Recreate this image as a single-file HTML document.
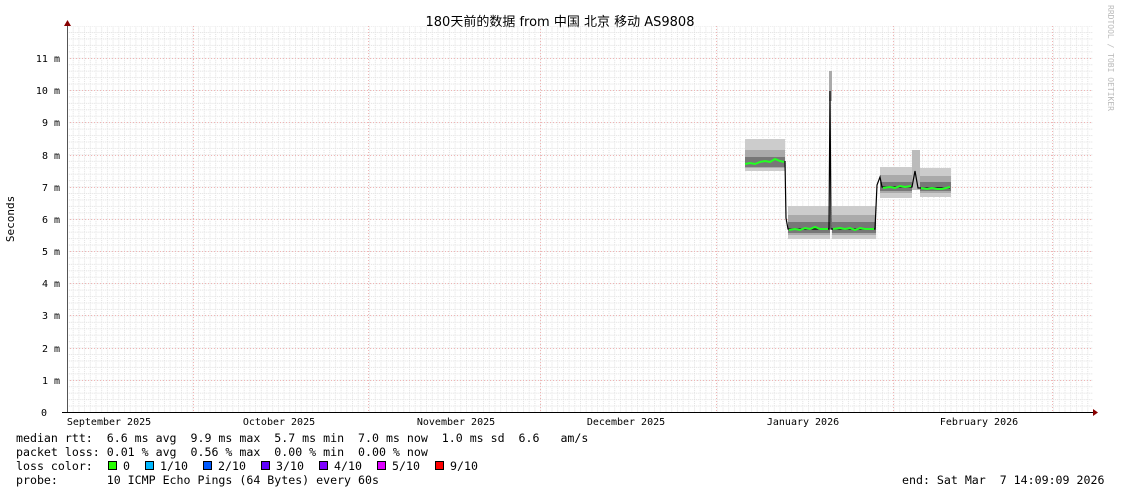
<!DOCTYPE html>
<html><head><meta charset="utf-8"><style>
html,body{margin:0;padding:0;background:#fff;width:1121px;height:494px;overflow:hidden}
svg text{font-family:"DejaVu Sans Mono","Liberation Mono",monospace;font-size:11.6px;fill:#000;white-space:pre}
</style></head><body>
<svg width="1121" height="494" viewBox="0 0 1121 494" xmlns="http://www.w3.org/2000/svg">
<defs>
<pattern id="gh" x="67" y="412" width="5.7" height="6.44" patternUnits="userSpaceOnUse">
<line x1="0" y1="0.5" x2="5.7" y2="0.5" stroke="#e0e0e0" stroke-width="1" stroke-dasharray="1,1"/>
<line x1="0.5" y1="0" x2="0.5" y2="6.44" stroke="#e0e0e0" stroke-width="1" stroke-dasharray="1,1"/>
</pattern>
</defs>
<text x="560" y="26" text-anchor="middle" style="font-family:'DejaVu Sans','Noto Sans CJK SC',sans-serif;font-size:13px">180天前的数据 from 中国 北京 移动 AS9808</text>
<text transform="translate(1108,5) rotate(90)" style="font-size:8px;fill:#bbb">RRDTOOL / TOBI OETIKER</text>
<text transform="translate(14,219) rotate(-90)" text-anchor="middle" style="font-size:11px">Seconds</text>
<rect x="67" y="26" width="1026" height="386" fill="url(#gh)"/>
<g stroke="#f0b4b4" stroke-width="1" stroke-dasharray="1,2">
<line x1="67" y1="58.5" x2="1093" y2="58.5"/><line x1="67" y1="90.5" x2="1093" y2="90.5"/><line x1="67" y1="122.5" x2="1093" y2="122.5"/><line x1="67" y1="155.5" x2="1093" y2="155.5"/><line x1="67" y1="187.5" x2="1093" y2="187.5"/><line x1="67" y1="219.5" x2="1093" y2="219.5"/><line x1="67" y1="251.5" x2="1093" y2="251.5"/><line x1="67" y1="283.5" x2="1093" y2="283.5"/><line x1="67" y1="315.5" x2="1093" y2="315.5"/><line x1="67" y1="348.5" x2="1093" y2="348.5"/><line x1="67" y1="380.5" x2="1093" y2="380.5"/>
<line x1="193.5" y1="26" x2="193.5" y2="412"/><line x1="368.5" y1="26" x2="368.5" y2="412"/><line x1="540.5" y1="26" x2="540.5" y2="412"/><line x1="716.5" y1="26" x2="716.5" y2="412"/><line x1="893.5" y1="26" x2="893.5" y2="412"/><line x1="1052.5" y1="26" x2="1052.5" y2="412"/>
</g>
<g text-anchor="end">
<text x="60" y="62" style="font-size:10px">11 m</text><text x="60" y="94" style="font-size:10px">10 m</text><text x="60" y="126" style="font-size:10px">9 m</text><text x="60" y="159" style="font-size:10px">8 m</text><text x="60" y="191" style="font-size:10px">7 m</text><text x="60" y="223" style="font-size:10px">6 m</text><text x="60" y="255" style="font-size:10px">5 m</text><text x="60" y="287" style="font-size:10px">4 m</text><text x="60" y="319" style="font-size:10px">3 m</text><text x="60" y="352" style="font-size:10px">2 m</text><text x="60" y="384" style="font-size:10px">1 m</text><text x="47" y="416" style="font-size:10px">0</text>
</g>
<g>
<rect x="745" y="139" width="40" height="32" fill="#ccc"/><rect x="745" y="150" width="40" height="18" fill="#aaa"/><rect x="745" y="157" width="40" height="10" fill="#777"/>
<rect x="788" y="206" width="42" height="33" fill="#ccc"/><rect x="788" y="215" width="42" height="20" fill="#aaa"/><rect x="788" y="222" width="42" height="11" fill="#777"/>
<rect x="832" y="206" width="44" height="33" fill="#ccc"/><rect x="832" y="215" width="44" height="20" fill="#aaa"/><rect x="832" y="222" width="44" height="11" fill="#777"/>
<rect x="829" y="71" width="3" height="30" fill="#aaa"/>
<rect x="880" y="167" width="32" height="31" fill="#ccc"/><rect x="880" y="175" width="32" height="18" fill="#aaa"/><rect x="880" y="182" width="32" height="9" fill="#777"/>
<rect x="912" y="150" width="8" height="40" fill="#bbb"/>
<rect x="920" y="168" width="31" height="29" fill="#ccc"/><rect x="920" y="176" width="31" height="17" fill="#aaa"/><rect x="920" y="182" width="31" height="9" fill="#777"/>
<polyline fill="none" stroke="#000" stroke-width="1.2" points="785,161 786,218 788,229 829,229 830,91 831,229 875,229 877,185 880,177 882,187 912,187 915,171 918,188 950,188"/>
<polyline fill="none" stroke="#2f2" stroke-width="2" points="745,164 750,163 755,164 760,162 765,161 770,162 775,159 780,161 784,162"/>
<polyline fill="none" stroke="#2f2" stroke-width="2" points="789,230 795,229 800,230 805,228 810,229 815,227 820,229 828,229"/>
<polyline fill="none" stroke="#2f2" stroke-width="2" points="833,229 840,228 845,229 850,228 855,230 860,228 865,229 874,229"/>
<polyline fill="none" stroke="#2f2" stroke-width="2" points="883,188 890,187 895,188 900,186 905,187 911,186"/>
<polyline fill="none" stroke="#2f2" stroke-width="2" points="921,188 927,189 932,188 937,189 942,189 950,187"/>
</g>
<line x1="67.5" y1="24" x2="67.5" y2="412" stroke="#555"/>
<polygon points="64,26 71,26 67.5,20" fill="#800"/>
<line x1="62" y1="412.5" x2="1094" y2="412.5" stroke="#000"/>
<polygon points="1093,409 1093,416 1098,412.5" fill="#800"/>
<g text-anchor="middle">
<text x="109" y="425" style="font-size:10px">September 2025</text><text x="279" y="425" style="font-size:10px">October 2025</text><text x="456" y="425" style="font-size:10px">November 2025</text><text x="626" y="425" style="font-size:10px">December 2025</text><text x="803" y="425" style="font-size:10px">January 2026</text><text x="979" y="425" style="font-size:10px">February 2026</text>
</g>
<text x="16" y="442">median rtt:  6.6 ms avg  9.9 ms max  5.7 ms min  7.0 ms now  1.0 ms sd  6.6   am/s</text>
<text x="16" y="456">packet loss: 0.01 % avg  0.56 % max  0.00 % min  0.00 % now</text>
<text x="16" y="470">loss color:</text>
<text x="16" y="484">probe:       10 ICMP Echo Pings (64 Bytes) every 60s</text>
<text x="902" y="484">end: Sat Mar  7 14:09:09 2026</text>
<g stroke="#000" stroke-width="1">
<rect x="108.5" y="461.5" width="8" height="8" fill="#26ff00"/>
<rect x="145.5" y="461.5" width="8" height="8" fill="#00b8ff"/>
<rect x="203.5" y="461.5" width="8" height="8" fill="#0059ff"/>
<rect x="261.5" y="461.5" width="8" height="8" fill="#5e00ff"/>
<rect x="319.5" y="461.5" width="8" height="8" fill="#7e00ff"/>
<rect x="377.5" y="461.5" width="8" height="8" fill="#dd00ff"/>
<rect x="435.5" y="461.5" width="8" height="8" fill="#ff0000"/>
</g>
<text x="123" y="470">0</text><text x="160" y="470">1/10</text><text x="218" y="470">2/10</text><text x="276" y="470">3/10</text><text x="334" y="470">4/10</text><text x="392" y="470">5/10</text><text x="450" y="470">9/10</text>
</svg>
</body></html>
